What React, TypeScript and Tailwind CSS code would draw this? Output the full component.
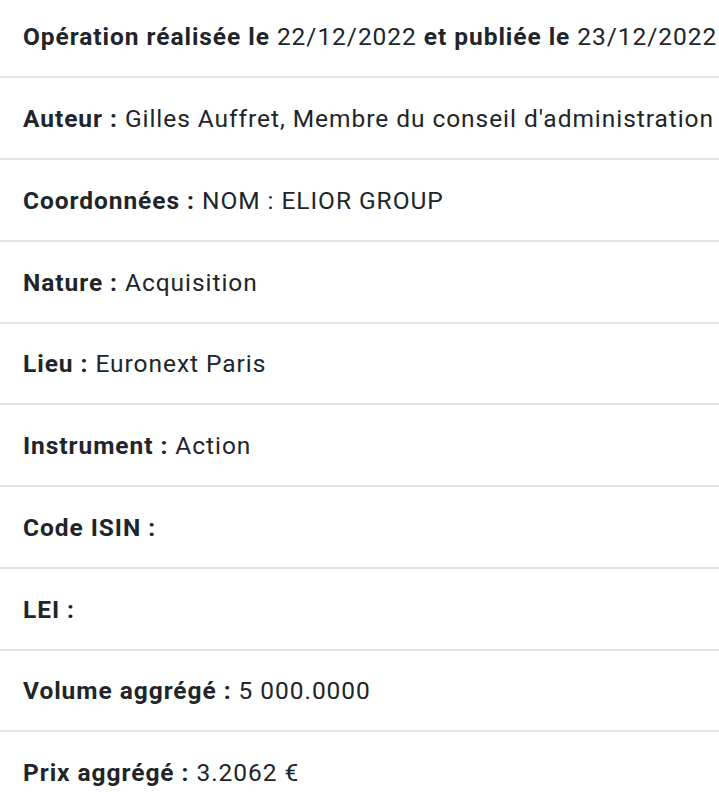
const rows: { label: string; value?: string }[] = [
  { label: 'Auteur :', value: "Gilles Auffret, Membre du conseil d'administration" },
  { label: 'Coordonnées :', value: 'NOM : ELIOR GROUP' },
  { label: 'Nature :', value: 'Acquisition' },
  { label: 'Lieu :', value: 'Euronext Paris' },
  { label: 'Instrument :', value: 'Action' },
  { label: 'Code ISIN :' },
  { label: 'LEI :' },
  { label: 'Volume aggrégé :', value: '5 000.0000' },
  { label: 'Prix aggrégé :', value: '3.2062 €' },
];

function Row({ children }: { children: React.ReactNode }) {
  return (
    <div className="flex items-center h-[81.75px] border-b-2 border-[#e3e3e3] pl-[23px] pt-[2px] whitespace-nowrap overflow-hidden">
      <p className="text-[24.5px] leading-[36px] tracking-[0.95px]">{children}</p>
    </div>
  );
}

export default function App() {
  return (
    <div
      className="w-[719px] h-[808px] overflow-hidden bg-white text-[#212529]"
      style={{ fontFamily: 'Roboto, "Noto Sans", sans-serif' }}
    >
      <div className="-mt-[3.5px]">
        <Row>
          <span className="font-bold">Opération réalisée le</span> 22/12/2022{' '}
          <span className="font-bold">et publiée le</span> 23/12/2022
        </Row>
        {rows.map((r) => (
          <Row key={r.label}>
            <span className="font-bold">{r.label}</span>
            {r.value ? ' ' + r.value : ''}
          </Row>
        ))}
      </div>
    </div>
  );
}
